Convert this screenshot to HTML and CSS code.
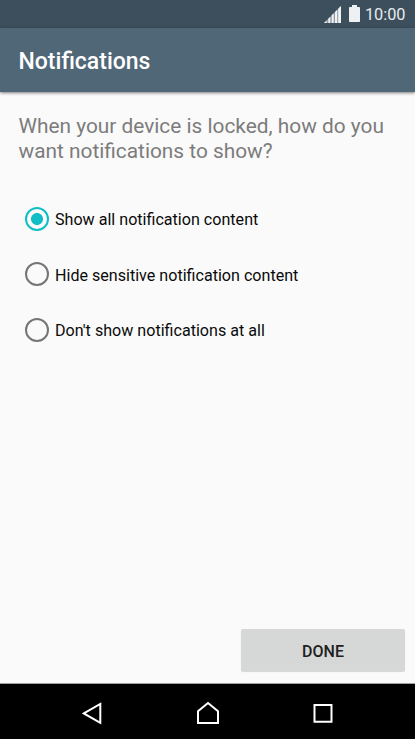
FILE: index.html
```html
<!DOCTYPE html>
<html lang="en">
<head>
<meta charset="utf-8">
<title>Notifications</title>
<link rel="stylesheet" href="styles.css">
</head>
<body>
<div class="status">
  <svg class="signal" width="17" height="17" viewBox="0 0 17 17">
    <path fill="#eef0f2" fill-opacity=".45" d="M0 17 17 0V17Z"/>
    <path fill="#f0f2f3" d="M0 17l2.600-2.600V17ZM4.300 12.700 6.300 10.700V17h-2ZM7.700 9.300 9.700 7.300V17h-2ZM11 6l2.200-2.200V17H11ZM14.200 2.800 17 0V17h-2.800Z"/>
  </svg>
  <svg class="battery" width="11" height="17" viewBox="0 0 11 17">
    <path fill="#eef0f2" d="M3 0h5v2h2.200q.8 0 .8.8V16.200q0 .8-.8.8H.8Q0 17 0 16.200V2.800Q0 2 .8 2H3Z"/>
  </svg>
  <span class="clock">10:00</span>
</div>
<header class="bar"><h1>Notifications</h1></header>
<main class="content">
  <p class="question">When your device is locked, how do you want notifications to show?</p>
  <div class="options" role="radiogroup">
    <div class="option" role="radio" aria-checked="true"><span class="radio on"></span><span class="label">Show all notification content</span></div>
    <div class="option" role="radio" aria-checked="false"><span class="radio"></span><span class="label">Hide sensitive notification content</span></div>
    <div class="option" role="radio" aria-checked="false"><span class="radio"></span><span class="label">Don't show notifications at all</span></div>
  </div>
  <button class="done">DONE</button>
</main>
<nav class="nav">
  <svg width="24" height="24" viewBox="0 0 24 24"><path d="M3.800 12.400 20.300 3V21.800Z"/></svg>
  <svg width="24" height="24" viewBox="0 0 24 24"><path d="M2 22V10.300L12 2 22 10.300V22Z"/></svg>
  <svg width="24" height="24" viewBox="0 0 24 24"><path d="M3.500 4H20.500V20.800H3.500Z"/></svg>
</nav>
</body>
</html>
```
FILE: styles.css
```css
* { box-sizing: border-box; }
body {
  margin: 0;
  width: 415px;
  height: 739px;
  display: flex;
  flex-direction: column;
  overflow: hidden;
  background: #fafafa;
  font-family: Roboto, "Liberation Sans", sans-serif;
}
.status {
  height: 28px;
  flex: none;
  background: #3d4f5d;
  display: flex;
  justify-content: flex-end;
  padding-right: 9.500px;
}
.signal { margin: 6px 8px 0 0; }
.battery { margin: 5px 5px 0 0; }
.clock {
  color: #e8ebed;
  font-size: 16.300px;
  line-height: 30px;
  font-weight: 400;
}
.bar {
  height: 64px;
  flex: none;
  background: #506777;
  box-shadow: 0 1px 3px rgba(0, 0, 0, .5);
  padding-left: 18.500px;
  display: flex;
  align-items: center;
}
h1 {
  margin: 3px 0 0;
  color: #fff;
  font-size: 23px;
  line-height: 28px;
  font-weight: 500;
}
.content {
  flex: 1;
  display: flex;
  flex-direction: column;
  padding: 22px 10px 12px 18.500px;
  border-bottom: 1px solid #a0a0a0;
}
.question {
  margin: 0;
  color: #7c7c7c;
  font-size: 20.850px;
  line-height: 24.500px;
}
.options { padding: 28px 0 0 6.500px; }
.option {
  height: 55.500px;
  display: flex;
  align-items: center;
  gap: 6px;
  color: #0a0a0a;
  font-size: 16.100px;
}
.label { padding-top: 2px; }
.radio {
  width: 24px;
  height: 24px;
  flex: none;
  border: 2.500px solid #757575;
  border-radius: 50%;
}
.radio.on {
  border-color: #12bec6;
  background: radial-gradient(circle, #12bec6 5.600px, transparent 6.300px);
}
.done {
  margin-top: auto;
  align-self: flex-end;
  width: 164px;
  height: 42px;
  border: 0;
  border-radius: 2px;
  background: #d6d7d7;
  box-shadow: 0 1px 1px rgba(0, 0, 0, .15);
  color: #212121;
  font: 500 16px/42px Roboto, sans-serif;
  padding: 2px 0 0;
}
.nav {
  height: 55px;
  flex: none;
  background: #000;
  display: flex;
  justify-content: center;
  align-items: center;
  gap: 91.500px;
  padding-top: 2px;
}
.nav path {
  fill: none;
  stroke: #fff;
  stroke-width: 2;
}
```
